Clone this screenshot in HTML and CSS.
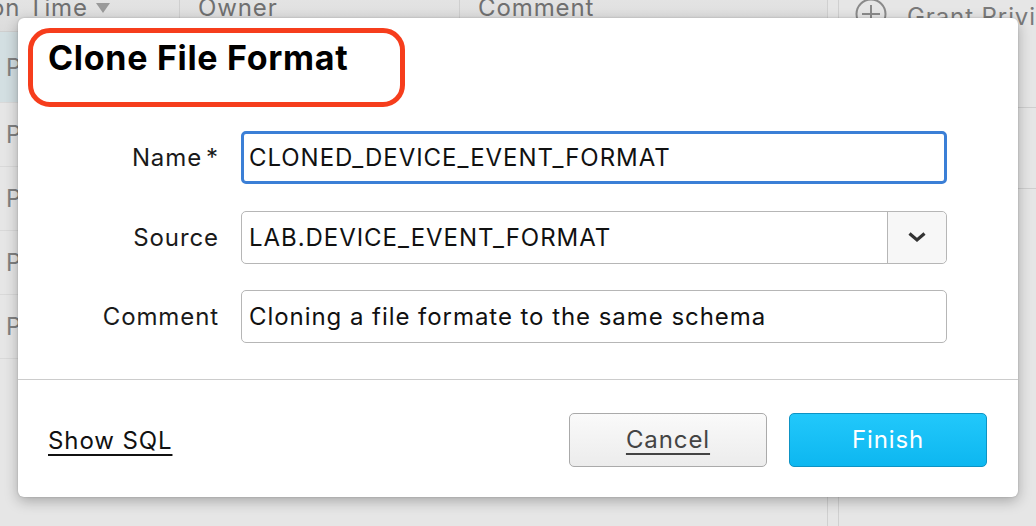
FILE: index.html
```html
<!DOCTYPE html>
<html>
<head>
<meta charset="utf-8">
<link rel="stylesheet" href="styles.css">
</head>
<body>
<div class="app">
  <div class="table">
    <div class="thead">
      <div class="th th-time">on Time<span class="sort"></span></div>
      <div class="th th-owner">Owner</div>
      <div class="th th-comment">Comment</div>
    </div>
    <div class="row row-sel"><span class="cell">P</span></div>
    <div class="row"><span class="cell">P</span></div>
    <div class="row"><span class="cell">P</span></div>
    <div class="row"><span class="cell">P</span></div>
    <div class="row"><span class="cell">P</span></div>
  </div>
  <div class="panel">
    <div class="panel-head">
      <svg class="plus" width="32" height="32" viewBox="0 0 32 32"><circle cx="16" cy="16" r="14.5" fill="none" stroke="#8a8a8a" stroke-width="2"/><path d="M16 7v18M7 16h18" stroke="#8a8a8a" stroke-width="2"/></svg>
      <span>Grant Privileges</span>
    </div>
    <div class="panel-sec"></div>
    <div class="panel-sec"></div>
  </div>

  <div class="dialog">
    <div class="dlg-head">
      <h1 class="title">Clone File Format</h1>
    </div>
    <div class="form">
      <label class="lbl">Name<span class="req">*</span></label>
      <div class="field focus">CLONED_DEVICE_EVENT_FORMAT</div>
      <label class="lbl">Source</label>
      <div class="field select">
        <span class="sel-val">LAB.DEVICE_EVENT_FORMAT</span>
        <span class="sel-btn"><svg width="20" height="12" viewBox="0 0 20 12"><path d="M2.5 2.5l7.5 6.5 7.5-6.5" fill="none" stroke="#333" stroke-width="3.2"/></svg></span>
      </div>
      <label class="lbl">Comment</label>
      <div class="field">Cloning a file formate to the same schema</div>
    </div>
    <div class="footer">
      <a class="show-sql">Show SQL</a>
      <div class="btns">
        <button class="btn btn-cancel"><u>Cancel</u></button>
        <button class="btn btn-finish">Finish</button>
      </div>
    </div>
    <div class="annot"></div>
  </div>
</div>
</body>
</html>
```
FILE: styles.css
```css
* { box-sizing: border-box; }
html, body { margin: 0; padding: 0; }
body {
  width: 1036px;
  height: 526px;
  overflow: hidden;
  font-family: Inter, "Noto Sans", sans-serif;
  background: #e6e6e6;
}
.app {
  position: relative;
  display: flex;
  height: 526px;
}
.table {
  flex: 0 0 828px;
  width: 828px;
  border-right: 1px solid #d0d0d0;
  background: #e6e6e6;
}
.thead {
  display: flex;
  height: 35px;
  background: linear-gradient(#e4e4e4, #dcdcdc);
  border-bottom: 1px solid #cfcfcf;
  color: #707070;
  font-size: 24px;
  letter-spacing: 0.9px;
  line-height: 22px;
  margin-top: -3px;
  padding-top: 0;
}
.th {
  padding-left: 18px;
  border-right: 1px solid #cfcfcf;
  white-space: nowrap;
  overflow: hidden;
  height: 100%;
}
.th-time { width: 180px; padding-left: 0; text-indent: -10px; }
.th-owner { width: 280px; }
.th-comment { flex: 1; border-right: none; }
.sort {
  display: inline-block;
  width: 0; height: 0;
  border-left: 7px solid transparent;
  border-right: 7px solid transparent;
  border-top: 10px solid #9a9a9a;
  margin-left: 8px;
  vertical-align: 3px;
}
.row {
  height: 64px;
  border-bottom: 1px solid #d9d9d9;
  display: flex;
  align-items: center;
  padding-left: 6px;
  color: #808080;
  font-size: 24px;
}
.row-sel { height: 71px; background: #d3dfe2; }
.panel {
  flex: 1;
  min-width: 0;
  overflow: hidden;
  border-left: 1px solid #d0d0d0;
  margin-left: 10px;
  background: #e6e6e6;
}
.panel-head {
  height: 110px;
  border-bottom: 1px solid #cfcfcf;
  display: flex;
  align-items: flex-start;
  gap: 20px;
  padding: 0 0 0 16px;
  margin-top: -2px;
  color: #7a7a7a;
  font-size: 24px;
  letter-spacing: 0.9px;
  white-space: nowrap;
}
.plus { flex: 0 0 auto; }
.panel-head span { line-height: 38px; }
.panel-sec { height: 81px; border-bottom: 1px solid #cfcfcf; }
.panel-sec + .panel-sec { border-bottom: none; }

.dialog {
  position: absolute;
  left: 18px;
  top: 18px;
  width: 1000px;
  height: 479px;
  background: #fff;
  border-radius: 6px;
  box-shadow: 0 4px 14px rgba(0,0,0,0.28), 0 0 2px rgba(0,0,0,0.2);
  display: flex;
  flex-direction: column;
}
.dlg-head { padding: 19px 30px 0; height: 113px; flex: 0 0 auto; }
.title {
  margin: 0;
  font-size: 34px;
  font-weight: 700;
  line-height: 42px;
  color: #000;
  letter-spacing: 0.7px;
}
.form {
  display: grid;
  grid-template-columns: 201px 706px;
  column-gap: 22px;
  row-gap: 26.5px;
  grid-auto-rows: 53px;
  align-content: start;
  height: 249px;
  flex: 0 0 auto;
  border-bottom: 1px solid #cccccc;
}
.lbl {
  text-align: right;
  align-self: center;
  font-size: 24px;
  letter-spacing: 0.9px;
  color: #1a1a1a;
}
.req { margin-left: 4px; }
.field {
  border: 1px solid #b6b6b6;
  border-radius: 5px;
  display: flex;
  align-items: center;
  padding-left: 7px;
  font-size: 24px;
  letter-spacing: 0.95px;
  color: #111;
  white-space: nowrap;
}
.field.focus {
  border: 3px solid #3b7fd6;
  padding-left: 5px;
}
.field.select { padding-left: 0; }
.sel-val { flex: 1; padding-left: 7px; }
.sel-btn {
  width: 59px;
  height: 100%;
  border-left: 1px solid #b6b6b6;
  background: #f7f7f7;
  border-radius: 0 5px 5px 0;
  display: flex;
  align-items: center;
  justify-content: center;
}
.footer {
  flex: 1;
  display: flex;
  align-items: center;
  justify-content: space-between;
  padding: 2px 31px 0 30px;
}
.show-sql {
  font-size: 24px;
  letter-spacing: 0.9px;
  color: #111;
  text-decoration: underline;
  text-underline-offset: 5px;
  margin-top: 2px;
}
.btns { display: flex; gap: 22px; }
.btn {
  width: 198px;
  height: 54px;
  border-radius: 5px;
  font-family: Inter, "Noto Sans", sans-serif;
  font-size: 24px;
  letter-spacing: 0.9px;
  padding: 0;
}
.btn-cancel {
  border: 1px solid #aaaaaa;
  background: linear-gradient(#fafafa, #ececec);
  color: #444;
}
.btn-cancel u { text-underline-offset: 5px; }
.btn-finish {
  border: 1px solid #0d93c4;
  background: linear-gradient(#22c8fb, #0db7f0);
  color: #fff;
}
.annot {
  position: absolute;
  left: 10px;
  top: 10px;
  width: 377px;
  height: 79px;
  border: 5px solid #f63d1c;
  border-radius: 22px;
  pointer-events: none;
}
```
